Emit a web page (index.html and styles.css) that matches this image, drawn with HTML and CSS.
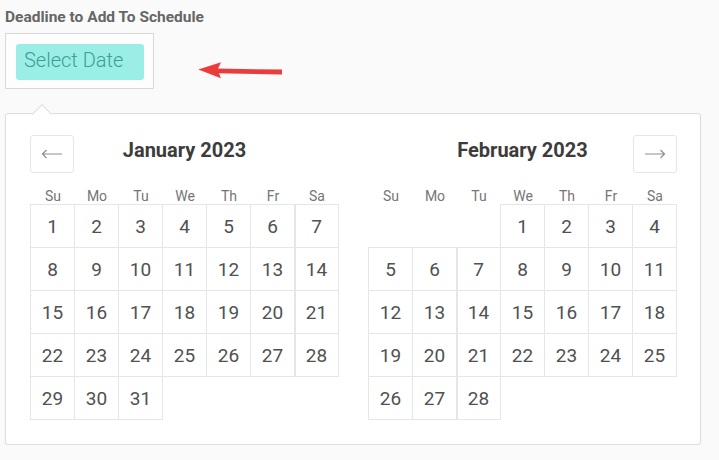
FILE: index.html
```html
<!DOCTYPE html>
<html lang="en">
<head>
<meta charset="utf-8">
<title>Deadline picker</title>
<link rel="stylesheet" href="styles.css">
</head>
<body>
<div class="page">
  <div class="label">Deadline to Add To Schedule</div>
  <div class="field-row">
    <div class="field"><button class="select-btn" type="button">Select Date</button></div>
    <svg class="pointer" width="88" height="20" viewBox="0 0 88 20" aria-hidden="true">
      <polygon points="2.3,9.6 25,2.3 21.5,9.8 25,18.3" fill="#ec3b3b"/>
      <polygon points="20,8.6 86,9.6 86,14.4 20,13.2" fill="#ec3b3b"/>
    </svg>
  </div>

  <div class="picker">
    <div class="month">
      <div class="month-head">
        <button class="nav" type="button" aria-label="Previous month">
          <svg width="22" height="10" viewBox="0 0 22 10"><path d="M21 5H1.5M5.5 1L1.5 5L5.5 9" fill="none" stroke="#8a8f91" stroke-width="1.2"/></svg>
        </button>
        <div class="title">January 2023</div>
        <span></span>
      </div>
      <div class="weekdays"><span>Su</span><span>Mo</span><span>Tu</span><span>We</span><span>Th</span><span>Fr</span><span>Sa</span></div>
      <div class="days jan">
        <span>1</span><span>2</span><span>3</span><span>4</span><span>5</span><span>6</span><span class="dbl">7</span>
        <span>8</span><span>9</span><span>10</span><span>11</span><span>12</span><span>13</span><span class="dbl">14</span>
        <span>15</span><span>16</span><span>17</span><span>18</span><span>19</span><span>20</span><span class="dbl">21</span>
        <span>22</span><span>23</span><span>24</span><span>25</span><span>26</span><span>27</span><span class="dbl">28</span>
        <span>29</span><span>30</span><span>31</span>
      </div>
    </div>

    <div class="month">
      <div class="month-head">
        <span></span>
        <div class="title">February 2023</div>
        <button class="nav" type="button" aria-label="Next month">
          <svg width="22" height="10" viewBox="0 0 22 10"><path d="M1 5H20.5M16.5 1L20.5 5L16.5 9" fill="none" stroke="#8a8f91" stroke-width="1.2"/></svg>
        </button>
      </div>
      <div class="weekdays"><span>Su</span><span>Mo</span><span>Tu</span><span>We</span><span>Th</span><span>Fr</span><span>Sa</span></div>
      <div class="days feb">
        <span class="wed">1</span><span>2</span><span>3</span><span>4</span>
        <span>5</span><span>6</span><span class="dbl">7</span><span>8</span><span>9</span><span>10</span><span>11</span>
        <span>12</span><span>13</span><span class="dbl">14</span><span>15</span><span>16</span><span>17</span><span>18</span>
        <span>19</span><span>20</span><span class="dbl">21</span><span>22</span><span>23</span><span>24</span><span>25</span>
        <span>26</span><span>27</span><span class="dbl">28</span>
      </div>
    </div>
  </div>
</div>
</body>
</html>
```

FILE: styles.css
```css
* { box-sizing: border-box; }

html, body {
  margin: 0;
  background: #fafafa;
}

body {
  font-family: Roboto, "Liberation Sans", Arial, sans-serif;
}

.page {
  padding: 8px 0 0 5px;
}

.label {
  font-size: 15.5px;
  font-weight: 700;
  line-height: 18px;
  color: #666666;
  padding-left: 0;
}

.field-row {
  display: flex;
  margin-top: 7px;
}

.field {
  width: 149px;
  height: 56px;
  border: 1px solid #d9d9d9;
  background: #fdfdfd;
  padding: 10px 9px 8px 10px;
}

.select-btn {
  display: block;
  width: 128px;
  height: 36px;
  margin: 0;
  border: 0;
  border-radius: 3px;
  background: #9beee5;
  color: #3a9d96;
  font-family: Roboto, "Liberation Sans", Arial, sans-serif;
  font-weight: 300;
  font-size: 20px;
  line-height: 33px;
  padding: 0 0 3px 8px;
  text-align: left;
}

.pointer {
  display: block;
  margin: 27px 0 0 42px;
}

.picker {
  position: relative;
  display: flex;
  gap: 29px;
  width: 696px;
  margin-top: 24px;
  padding: 21px 23px 24px 24px;
  background: #ffffff;
  border: 1px solid #dedede;
  border-radius: 3px;
  box-shadow: 0 1px 2px rgba(0, 0, 0, 0.05);
}

.picker::before {
  content: "";
  position: absolute;
  top: -7px;
  left: 29px;
  width: 13px;
  height: 13px;
  background: #ffffff;
  border-top: 1px solid #dedede;
  border-left: 1px solid #dedede;
  transform: rotate(45deg);
}

.month {
  width: 309px;
}

.month-head {
  display: grid;
  grid-template-columns: 44px 1fr 44px;
  height: 38px;
}

.nav {
  display: flex;
  align-items: center;
  justify-content: center;
  width: 44px;
  height: 38px;
  margin: 0;
  padding: 0;
  background: #ffffff;
  border: 1px solid #e4e7e7;
  border-radius: 3px;
}

.title {
  align-self: start;
  text-align: center;
  font-size: 20px;
  font-weight: 700;
  line-height: 30px;
  color: #3c3c3c;
}

.weekdays {
  display: grid;
  grid-template-columns: repeat(7, 44px);
  margin-top: 16px;
  padding-left: 1px;
  font-size: 14px;
  line-height: 15px;
  color: #757575;
}

.weekdays span {
  text-align: center;
}

.days {
  display: grid;
  grid-template-columns: repeat(7, 43px);
  grid-auto-rows: 42px;
  gap: 1px;
  padding: 1px;
}

.days span {
  display: flex;
  align-items: center;
  justify-content: center;
  font-size: 19px;
  color: #4f5152;
  background: #ffffff;
  box-shadow: 0 0 0 1px #e4e7e7;
}

.days span.dbl {
  box-shadow: 0 0 0 1px #e4e7e7, inset 1px 0 0 #e4e7e7;
}

.days .wed {
  grid-column-start: 4;
}
```
